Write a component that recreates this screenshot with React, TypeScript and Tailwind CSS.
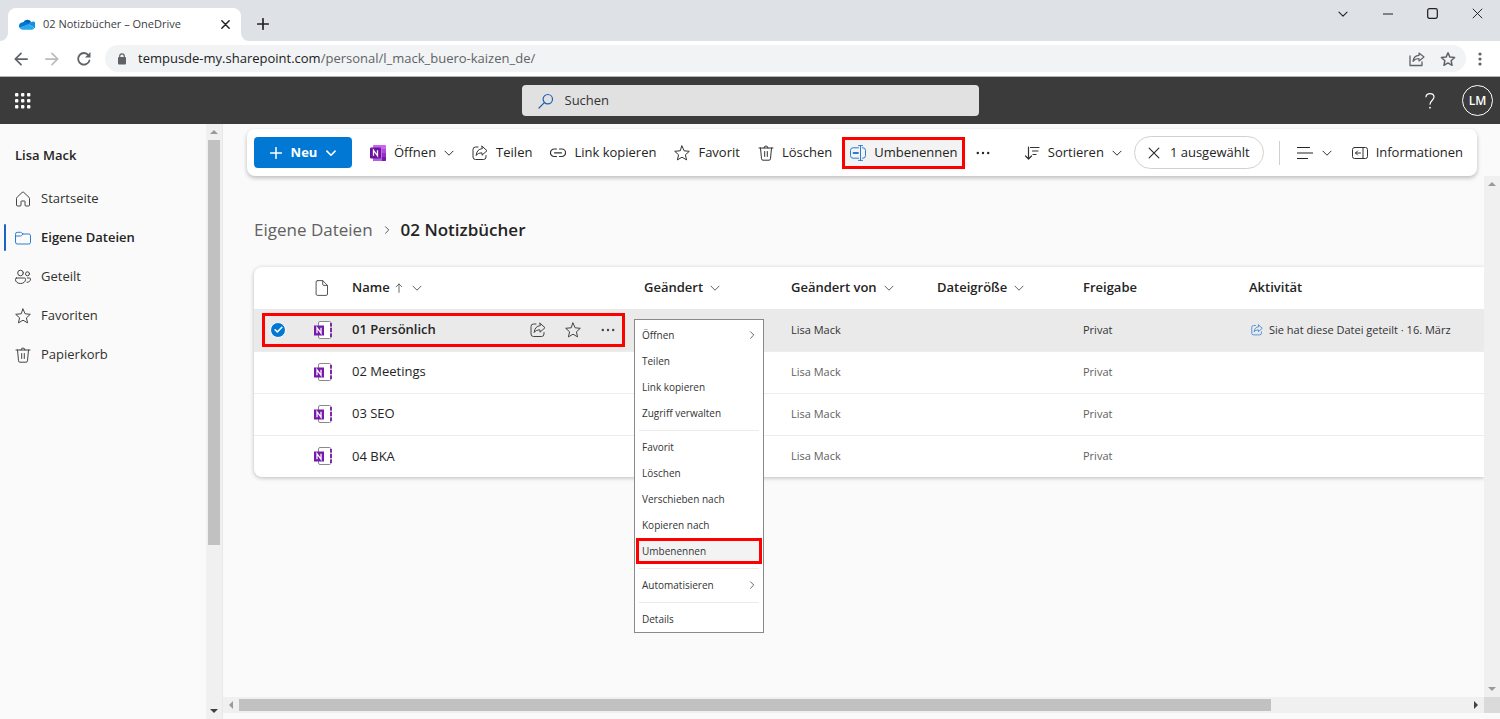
import type { ReactNode } from "react";
import clsx from "clsx";

// ---------------------------------------------------------------------------
// Data
// ---------------------------------------------------------------------------

const NAV_ITEMS = [
  { label: "Startseite", icon: <HomeIcon /> },
  { label: "Eigene Dateien", icon: <FolderIcon />, active: true },
  { label: "Geteilt", icon: <PeopleIcon /> },
  { label: "Favoriten", icon: <StarIcon /> },
  { label: "Papierkorb", icon: <TrashIcon /> },
];

const FILES = [
  { name: "01 Persönlich", owner: "Lisa Mack", sharing: "Privat", selected: true, activity: "Sie hat diese Datei geteilt · 16. März" },
  { name: "02 Meetings", owner: "Lisa Mack", sharing: "Privat" },
  { name: "03 SEO", owner: "Lisa Mack", sharing: "Privat" },
  { name: "04 BKA", owner: "Lisa Mack", sharing: "Privat" },
];

const MENU_GROUPS = [
  [{ label: "Öffnen", submenu: true }, { label: "Teilen" }, { label: "Link kopieren" }, { label: "Zugriff verwalten" }],
  [
    { label: "Favorit" },
    { label: "Löschen" },
    { label: "Verschieben nach" },
    { label: "Kopieren nach" },
    { label: "Umbenennen", marked: true },
  ],
  [{ label: "Automatisieren", submenu: true }],
  [{ label: "Details" }],
];

// ---------------------------------------------------------------------------
// Icons
// ---------------------------------------------------------------------------

function Icon({ children, className = "size-4" }: { children: ReactNode; className?: string }) {
  return (
    <svg
      viewBox="0 0 16 16"
      fill="none"
      stroke="currentColor"
      strokeWidth="1"
      strokeLinecap="round"
      strokeLinejoin="round"
      className={clsx("shrink-0", className)}
      aria-hidden="true"
    >
      {children}
    </svg>
  );
}

function HomeIcon() {
  return (
    <Icon>
      <path d="M7.3 1.3a1 1 0 0 1 1.4 0l5.3 5c.3.3.5.7.5 1.1V14a1 1 0 0 1-1 1H11a1 1 0 0 1-1-1v-3.5a.5.5 0 0 0-.5-.5h-3a.5.5 0 0 0-.5.5V14a1 1 0 0 1-1 1H2.500a1 1 0 0 1-1-1V7.4c0-.4.2-.8.5-1.1z" />
    </Icon>
  );
}

function FolderIcon() {
  return (
    <Icon>
      <path d="M.5 4a1.700 1.700 0 0 1 1.700-1.700h3.400c.4 0 .8.2 1.100.5L8 4h5.800a1.700 1.700 0 0 1 1.700 1.700v6.600a1.700 1.700 0 0 1-1.700 1.700H2.200A1.700 1.700 0 0 1 .5 12.300zM.5 6h5.100c.4 0 .8-.2 1.100-.5L8 4" />
    </Icon>
  );
}

function PeopleIcon() {
  return (
    <Icon>
      <circle cx="5.5" cy="4" r="2.8" />
      <circle cx="12.5" cy="4.8" r="2" />
      <path d="M1.500 9h8a1 1 0 0 1 1 1v.7c0 2-2 3.800-5 3.800s-5-1.800-5-3.800V10a1 1 0 0 1 1-1zM12.300 9h2.200a1 1 0 0 1 1 1c0 2-1.300 3.300-3.500 3.300" />
    </Icon>
  );
}

function StarIcon({ className }: { className?: string }) {
  return (
    <Icon className={className}>
      <path d="M8 1l2.100 4.800 5.200.5-3.900 3.500 1.200 5.100L8 12.200l-4.600 2.700 1.200-5.100L.7 6.300l5.200-.5z" />
    </Icon>
  );
}

function TrashIcon() {
  return (
    <Icon>
      <path d="M1 3h14M6 3a2 2 0 0 1 4 0M2.500 3l1 10.800A1.500 1.500 0 0 0 5 15.200h6a1.500 1.500 0 0 0 1.500-1.400L13.500 3M6.700 6.500v5M9.300 6.500v5" />
    </Icon>
  );
}

function ShareIcon({ className }: { className?: string }) {
  return (
    <Icon className={className}>
      <path d="M6 2H3.500A2.500 2.500 0 0 0 1 4.500V12a2.500 2.500 0 0 0 2.500 2.500h8A2.500 2.500 0 0 0 14 12v-1.500" />
      <path d="M10 1.200l5 4.500-5 4.500V7.900c-2.800 0-4.600.7-5.800 2.600C4.400 6.600 6.500 4 10 3.600z" />
    </Icon>
  );
}

function LinkIcon() {
  return (
    <Icon>
      <path d="M6.500 4H4.200a3.700 3.700 0 0 0 0 7.500h2.300M9.500 4h2.300a3.700 3.700 0 0 1 0 7.500H9.500M4.500 7.800h7" strokeWidth="1.2" />
    </Icon>
  );
}

function RenameIcon() {
  return (
    <Icon>
      <path d="M8.500 2.800H3A2.500 2.500 0 0 0 .5 5.300v5.400A2.500 2.500 0 0 0 3 13.200h5.500M12.500 2.800h.5a2.500 2.500 0 0 1 2.500 2.500v5.400a2.500 2.500 0 0 1-2.500 2.500h-.5M8.500.6h4M8.500 15.400h4M10.500.6v14.800" />
      <path d="M3.500 8H8" strokeWidth="1.8" />
    </Icon>
  );
}

function SortIcon() {
  return (
    <Icon>
      <path d="M4.500 2v12M1.500 11l3 3 3-3M6.500 2.500h8.500M8.500 6H14M9 9.500h3" strokeWidth="1.2" />
    </Icon>
  );
}

function MoreIcon() {
  return (
    <Icon>
      <g fill="currentColor" stroke="none">
        <circle cx="2.8" cy="8" r="1.2" />
        <circle cx="8" cy="8" r="1.2" />
        <circle cx="13.2" cy="8" r="1.2" />
      </g>
    </Icon>
  );
}

function CloseIcon({ className = "size-3", width = "1.4" }: { className?: string; width?: string }) {
  return (
    <Icon className={className}>
      <path d="M1.500 1.500l13 13M14.500 1.500l-13 13" strokeWidth={width} />
    </Icon>
  );
}

function ListIcon() {
  return (
    <Icon>
      <path d="M.5 2.500h12M.5 8h15M.5 13.500h10" strokeWidth="1.2" />
    </Icon>
  );
}

function InfoPaneIcon() {
  return (
    <Icon>
      <rect x=".5" y="2.500" width="15" height="11" rx="2" />
      <path d="M11 2.500v11M8.500 8h-5M5.500 6l-2 2 2 2" />
    </Icon>
  );
}

function ChevronDown({ className = "size-[10px]", width = "1.5" }: { className?: string; width?: string }) {
  return (
    <Icon className={className}>
      <path d="M1.500 5L8 11.500 14.500 5" strokeWidth={width} />
    </Icon>
  );
}

function ChevronRight({ className = "size-2" }: { className?: string }) {
  return (
    <Icon className={className}>
      <path d="M5 1.500L11.500 8 5 14.500" strokeWidth="1.5" />
    </Icon>
  );
}

function DocumentIcon() {
  return (
    <Icon>
      <path d="M3.500.6h5.200l4.800 4.800V14a1.400 1.400 0 0 1-1.400 1.400H3.500A1.400 1.400 0 0 1 2.100 14V2A1.400 1.400 0 0 1 3.500.6zM8.700.6v3.600a1.200 1.200 0 0 0 1.200 1.200h3.600" />
    </Icon>
  );
}

function OneNoteAppIcon() {
  return (
    <svg viewBox="0 0 16 16" className="size-4 shrink-0" aria-hidden="true">
      <rect x="3" y="0" width="13" height="16" rx="1" fill="#ca64ea" />
      <path d="M12 4h4v4h-4z" fill="#ae4bd5" />
      <path d="M12 8h4v4h-4z" fill="#9332bf" />
      <path d="M3 12h13v3a1 1 0 0 1-1 1H4a1 1 0 0 1-1-1z" fill="#7719aa" />
      <path d="M3 12h9v4H4a1 1 0 0 1-1-1z" fill="#b55fe0" />
      <rect x="0" y="2.500" width="11" height="11" rx="1" fill="#6b14a0" />
      <path d="M3.500 10.800V5.200l4 5.600V5.200" fill="none" stroke="#fff" strokeWidth="1.3" />
    </svg>
  );
}

function OneNoteFileIcon() {
  return (
    <svg viewBox="0 0 18 18" className="size-[18px] shrink-0" aria-hidden="true">
      <rect x="4.500" y=".5" width="12.500" height="17" rx="1.500" fill="#fff" stroke="#8a8a8a" />
      <path d="M17 2v3.500M17 7v4M17 12.500V16" stroke="#7719aa" strokeWidth="1.8" />
      <path d="M0 4.500h10v10H0z" fill="#7719aa" />
      <path d="M3 12.300V6.700l4 5.600V6.700" fill="none" stroke="#fff" strokeWidth="1.3" />
    </svg>
  );
}

function OneDriveIcon() {
  return (
    <svg viewBox="0 0 16 11" className="h-[11px] w-4 shrink-0" aria-hidden="true">
      <path d="M4.200 3.500A4.600 4.600 0 0 1 12.300 3L9 6 4 5z" fill="#0364b8" />
      <path d="M4.200 3.200A3.800 3.800 0 0 0 .7 9.100L6.800 6.500 9.200 5A4 4 0 0 0 4.200 3.200z" fill="#0078d4" />
      <path d="M12.300 3.200A4 4 0 0 0 9 4.900l3.600 2 3 2.100a3.300 3.300 0 0 0-3.300-5.800z" fill="#1490df" />
      <path d="M.6 9A3.800 3.800 0 0 0 3.800 10.700h8.700A3.300 3.300 0 0 0 15.500 9L9.300 5.100z" fill="#28a8ea" />
    </svg>
  );
}

// ---------------------------------------------------------------------------
// Browser chrome
// ---------------------------------------------------------------------------

function TabStrip() {
  return (
    <div className="flex h-[41px] items-end bg-[#dee1e6] text-[#202124]">
      <svg viewBox="0 0 8 8" className="size-2 shrink-0" aria-hidden="true">
        <path d="M8 0a8 8 0 0 1-8 8h8z" fill="#fff" />
      </svg>
      <div className="flex h-[33px] w-[233px] items-center gap-2 rounded-t-lg bg-white px-[11px]">
        <OneDriveIcon />
        <span className="flex-1 truncate text-[11px] text-[#3c4043]">02 Notizbücher – OneDrive</span>
        <button type="button" aria-label="Tab schließen">
          <CloseIcon className="size-[9px]" width="2.6" />
        </button>
      </div>
      <svg viewBox="0 0 8 8" className="size-2 shrink-0" aria-hidden="true">
        <path d="M0 0a8 8 0 0 0 8 8H0z" fill="#fff" />
      </svg>
      <button type="button" aria-label="Neuer Tab" className="ml-2 flex h-[34px] items-center">
        <Icon className="size-3">
          <path d="M8 1v14M1 8h14" strokeWidth="2.2" />
        </Icon>
      </button>
      <div className="ml-auto flex self-start">
        <button type="button" aria-label="Tabs durchsuchen" className="flex h-[27px] w-[45px] items-center justify-center">
          <ChevronDown width="1.7" />
        </button>
        <button type="button" aria-label="Minimieren" className="flex h-[27px] w-[45px] items-center justify-center">
          <Icon className="size-[10px]">
            <path d="M0 8h16" strokeWidth="1.6" />
          </Icon>
        </button>
        <button type="button" aria-label="Maximieren" className="flex h-[27px] w-[45px] items-center justify-center">
          <Icon className="size-[11px]">
            <rect x="1" y="1" width="14" height="14" rx="2.5" strokeWidth="1.8" />
          </Icon>
        </button>
        <button type="button" aria-label="Schließen" className="flex h-[27px] w-[45px] items-center justify-center">
          <CloseIcon className="size-[11px]" />
        </button>
      </div>
    </div>
  );
}

function AddressBar() {
  return (
    <div className="flex h-9 items-center border-b border-[#b5b5b5] bg-white pr-[18px] pl-3.5 text-[#5f6368]">
      <button type="button" aria-label="Zurück">
        <Icon className="size-3.5">
          <path d="M15 8H1.500M8 1.500L1.500 8 8 14.500" strokeWidth="2" />
        </Icon>
      </button>
      <button type="button" aria-label="Vorwärts" className="ml-[17px] text-[#b9bbbe]">
        <Icon className="size-3.5">
          <path d="M1 8h13.500M8 1.500L14.500 8 8 14.500" strokeWidth="2" />
        </Icon>
      </button>
      <button type="button" aria-label="Neu laden" className="ml-[17px]">
        <Icon className="size-4">
          <path d="M13.500 9.500A5.800 5.800 0 1 1 12.500 4.200" strokeWidth="1.8" />
          <path d="M14.500 1v5.500H9z" fill="currentColor" stroke="none" />
        </Icon>
      </button>
      <div className="ml-[13px] flex h-[27px] flex-1 items-center rounded-full bg-[#f1f3f4] pr-2.5 pl-3 text-[13px]">
        <svg viewBox="0 0 10 12" className="h-3 w-2.5 shrink-0" aria-hidden="true">
          <rect x="1" y="4" width="8" height="7.500" rx="1" fill="#5f6368" />
          <path d="M2.700 4.500V3.200a2.300 2.300 0 0 1 4.600 0v1.300" fill="none" stroke="#5f6368" strokeWidth="1.2" />
        </svg>
        <label htmlFor="address" className="ml-[11px] text-[#202124]">
          tempusde-my.sharepoint.com
        </label>
        <input
          id="address"
          defaultValue="/personal/l_mack_buero-kaizen_de/"
          className="min-w-0 flex-1 bg-transparent text-[#5f6368] outline-none"
        />
        <button type="button" aria-label="Seite teilen" className="mr-[15px]">
          <Icon className="size-4">
            <path d="M1 5v9.500h12V11" strokeWidth="1.3" />
            <path d="M10 2l5 4-5 4V7.500c-3 0-4.500.8-6 2.800.4-3.500 2.500-5.600 6-5.900z" strokeWidth="1.2" />
          </Icon>
        </button>
        <button type="button" aria-label="Lesezeichen">
          <Icon className="size-4">
            <path d="M8 1.800l1.900 4.300 4.700.4-3.500 3.200 1 4.600L8 11.900l-4.100 2.400 1-4.600L1.400 6.500l4.700-.4z" strokeWidth="1.5" />
          </Icon>
        </button>
      </div>
      <button type="button" aria-label="Menü" className="ml-3">
        <svg viewBox="0 0 4 14" className="h-3.5 w-1" fill="currentColor" aria-hidden="true">
          <circle cx="2" cy="2" r="1.6" />
          <circle cx="2" cy="7" r="1.6" />
          <circle cx="2" cy="12" r="1.6" />
        </svg>
      </button>
    </div>
  );
}

function SuiteHeader() {
  return (
    <header className="grid h-[47px] grid-cols-[1fr_457px_1fr] items-center bg-[#3b3b3b] text-white">
      <button type="button" aria-label="App-Startfeld" className="ml-[15px] justify-self-start">
        <svg viewBox="0 0 16 16" className="size-4" fill="currentColor" aria-hidden="true">
          {[0, 6, 12].map((y) =>
            [0, 6, 12].map((x) => <rect key={`${x}-${y}`} x={x} y={y} width="3.400" height="3.400" rx="1" />),
          )}
        </svg>
      </button>
      <label className="flex h-[31px] items-center gap-[11px] rounded-sm bg-[#e1e1e1] px-4 text-[#333]">
        <Icon className="size-4 text-[#1f5fb0]">
          <circle cx="9.8" cy="6.2" r="4.7" strokeWidth="1.2" />
          <path d="M6.400 9.600L1 15" strokeWidth="1.2" />
        </Icon>
        <input
          type="search"
          aria-label="Suchen"
          placeholder="Suchen"
          className="min-w-0 flex-1 bg-transparent text-[13px] outline-none placeholder:text-[#333]"
        />
      </label>
      <div className="flex items-center justify-end gap-6 pr-[7px]">
        <button type="button" aria-label="Hilfe">
          <Icon className="size-4">
            <path d="M4 3.800C4.200 1.800 5.700.6 8 .6s4 1.300 4 3.500c0 3.100-4 3.700-4 7.100" strokeWidth="1.2" />
            <circle cx="8" cy="14.7" r=".9" fill="currentColor" stroke="none" />
          </Icon>
        </button>
        <button type="button" className="flex size-[31px] items-center justify-center rounded-full border border-white text-[12px] font-semibold">
          LM
        </button>
      </div>
    </header>
  );
}

// ---------------------------------------------------------------------------
// Scrollbars
// ---------------------------------------------------------------------------

function ScrollArrow({ direction, dark }: { direction: "up" | "down" | "left" | "right"; dark?: boolean }) {
  return (
    <span className="flex size-4 shrink-0 items-center justify-center">
      <svg
        viewBox="0 0 8 8"
        className={clsx(
          "size-2",
          dark ? "text-[#404040]" : "text-[#9a9a9a]",
          direction === "down" && "rotate-180",
          direction === "left" && "-rotate-90",
          direction === "right" && "rotate-90",
        )}
        fill="currentColor"
        aria-hidden="true"
      >
        <path d="M4 2l4 4H0z" />
      </svg>
    </span>
  );
}

// ---------------------------------------------------------------------------
// Sidebar
// ---------------------------------------------------------------------------

function Sidebar() {
  return (
    <aside className="flex w-[223px] shrink-0 border-r border-[#e8e8e8]">
      <nav className="flex-1">
        <h2 className="flex h-[55px] items-center pt-2 pl-[15px] text-[13px] font-semibold">Lisa Mack</h2>
        {NAV_ITEMS.map((item) => (
          <a
            key={item.label}
            href="#"
            className={clsx("flex h-[39px] items-center pl-1 text-[13px]", item.active ? "font-semibold" : "text-[#323130]")}
          >
            <span className={clsx("mr-[9px] h-[27px] w-0.5 rounded-full", item.active && "bg-[#1a66c2]")} />
            <span className={item.active ? "text-[#2b7cd3]" : "text-[#444]"}>{item.icon}</span>
            <span className="ml-[10px]">{item.label}</span>
          </a>
        ))}
      </nav>
      <div className="flex w-4 flex-col bg-[#f0f0f0]">
        <ScrollArrow direction="up" />
        <div className="flex-1 px-0.5">
          <div className="h-[72%] bg-[#c1c1c1]" />
        </div>
        <ScrollArrow direction="down" dark />
      </div>
    </aside>
  );
}

// ---------------------------------------------------------------------------
// Command bar
// ---------------------------------------------------------------------------

function Command({ icon, label, menu, marked }: { icon: ReactNode; label: string; menu?: boolean; marked?: boolean }) {
  return (
    <button
      type="button"
      className={clsx(
        "flex h-8 items-center gap-2 text-[13px] whitespace-nowrap",
        marked ? "border-3 border-[#f00] bg-[#f3f3f3] px-[5px]" : "px-2",
      )}
    >
      <span className={marked ? "text-[#2b7cd3]" : "text-[#333]"}>{icon}</span>
      {label}
      {menu && <ChevronDown />}
    </button>
  );
}

function CommandBar() {
  return (
    <div className="z-10 mt-[5px] mr-[23px] ml-6 flex h-[47px] shrink-0 items-center rounded-lg bg-white pr-1.5 pl-[7px] shadow-[0_2px_4px_rgba(0,0,0,0.25)]">
      <button
        type="button"
        className="mr-[10px] flex h-[31px] w-[98px] items-center justify-center gap-[9px] rounded bg-[#0078d4] text-[13px] font-bold text-white"
      >
        <Icon className="size-3">
          <path d="M8 .8v14.400M.8 8h14.400" strokeWidth="2" />
        </Icon>
        Neu
        <ChevronDown width="2.5" />
      </button>
      <div className="flex items-center gap-0.5">
        <Command icon={<OneNoteAppIcon />} label="Öffnen" menu />
        <Command icon={<ShareIcon />} label="Teilen" />
        <Command icon={<LinkIcon />} label="Link kopieren" />
        <Command icon={<StarIcon />} label="Favorit" />
        <Command icon={<TrashIcon />} label="Löschen" />
        <Command icon={<RenameIcon />} label="Umbenennen" marked />
        <button type="button" aria-label="Weitere Befehle" className="flex h-8 items-center px-2">
          <MoreIcon />
        </button>
      </div>
      <div className="ml-auto flex items-center">
        <Command icon={<SortIcon />} label="Sortieren" menu />
        <button
          type="button"
          className="ml-1 flex h-[33px] items-center gap-[10px] rounded-full border border-[#d1d1d1] px-[13px] text-[13px] whitespace-nowrap"
        >
          <CloseIcon />1 ausgewählt
        </button>
        <span className="mx-[15px] h-6 w-px bg-[#d1d1d1]" />
        <button type="button" aria-label="Ansicht" className="mr-3 flex h-8 items-center gap-[9px] pl-0.5">
          <ListIcon />
          <ChevronDown />
        </button>
        <Command icon={<InfoPaneIcon />} label="Informationen" />
      </div>
    </div>
  );
}

// ---------------------------------------------------------------------------
// File list
// ---------------------------------------------------------------------------

function FileTable() {
  return (
    <div className="mt-[25px] overflow-hidden rounded-l-lg bg-white shadow-[0_1px_4px_rgba(0,0,0,0.25)]">
      <table className="w-full table-fixed text-left">
        <colgroup>
          <col className="w-11" />
          <col className="w-12" />
          <col className="w-[292px]" />
          <col className="w-[147px]" />
          <col className="w-[146px]" />
          <col className="w-[146px]" />
          <col className="w-[166px]" />
          <col />
        </colgroup>
        <thead>
          <tr className="h-[42px] text-[13px] [&_svg]:text-[#555] [&_th]:px-1.5 [&_th]:font-semibold">
            <th aria-label="Auswahl" />
            <th aria-label="Dateityp">
              <span className="flex pl-2.5">
                <DocumentIcon />
              </span>
            </th>
            <th>
              <span className="flex items-center">
                Name
                <Icon className="ml-1 size-[10px]">
                  <path d="M8 15V1.500M3.500 6L8 1.500 12.500 6" strokeWidth="1.4" />
                </Icon>
                <ChevronDown className="ml-2 size-[10px]" />
              </span>
            </th>
            <th>
              <span className="flex items-center gap-[7px]">
                Geändert <ChevronDown />
              </span>
            </th>
            <th>
              <span className="flex items-center gap-[7px] whitespace-nowrap">
                Geändert von <ChevronDown />
              </span>
            </th>
            <th>
              <span className="flex items-center gap-[7px]">
                Dateigröße <ChevronDown />
              </span>
            </th>
            <th>Freigabe</th>
            <th>Aktivität</th>
          </tr>
        </thead>
        <tbody>
          {FILES.map((file) => (
            <tr
              key={file.name}
              className={clsx("h-[42px] border-b border-[#ededed] last:border-b-0 [&_td]:px-1.5", file.selected && "bg-[#eaeaea]")}
            >
              <td className="relative">
                {file.selected && (
                  <>
                    <label className="ml-[10px] grid size-4 place-items-center">
                      <input
                        type="checkbox"
                        aria-label={file.name}
                        defaultChecked
                        className="size-4 appearance-none rounded-full border border-white bg-[#0078d4] [grid-area:1/1]"
                      />
                      <Icon className="size-[9px] text-white [grid-area:1/1]">
                        <path d="M2 8.500l4 4 8-8.500" strokeWidth="2.8" />
                      </Icon>
                    </label>
                    <span className="pointer-events-none absolute top-1 left-2 h-[34px] w-[363px] border-3 border-[#f00]" />
                  </>
                )}
              </td>
              <td>
                <span className="flex pl-2.5">
                  <OneNoteFileIcon />
                </span>
              </td>
              <td>
                <div className="flex items-center text-[#444]">
                  <a href="#" className={clsx("flex-1 text-[13px] text-[#242424]", file.selected && "font-semibold")}>
                    {file.name}
                  </a>
                  {file.selected && (
                    <div className="flex gap-[19px] pr-4">
                      <button type="button" aria-label="Teilen">
                        <ShareIcon />
                      </button>
                      <button type="button" aria-label="Favorit">
                        <StarIcon />
                      </button>
                      <button type="button" aria-label="Weitere Aktionen">
                        <MoreIcon />
                      </button>
                    </div>
                  )}
                </div>
              </td>
              <td />
              <td className={clsx("text-[11px]", file.selected ? "text-[#333]" : "text-[#616161]")}>{file.owner}</td>
              <td />
              <td className={clsx("text-[11px]", file.selected ? "text-[#333]" : "text-[#616161]")}>{file.sharing}</td>
              <td>
                {file.activity && (
                  <span className="flex items-center gap-1.5 pl-0.5 text-[11px] whitespace-nowrap text-[#333]">
                    <ShareIcon className="size-3 text-[#2b7cd3]" />
                    {file.activity}
                  </span>
                )}
              </td>
            </tr>
          ))}
        </tbody>
      </table>
    </div>
  );
}

function ContextMenu() {
  return (
    <div
      role="menu"
      className="absolute top-[143px] left-[411px] w-[130px] border border-[#8a8a8a] bg-white pt-0.5 text-[10px] text-[#333]"
    >
      {MENU_GROUPS.map((group, index) => (
        <div key={group[0].label} role="group">
          {index > 0 && <hr className="mx-1 mt-1 mb-[3px] border-[#ebebeb]" />}
          {group.map((item) => (
            <button
              key={item.label}
              type="button"
              role="menuitem"
              className={clsx(
                "flex h-[26px] items-center justify-between",
                "marked" in item && item.marked
                  ? "mx-px w-[126px] border-3 border-[#f00] bg-[#f3f3f3] px-[3px]"
                  : "w-full px-[7px]",
              )}
            >
              {item.label}
              {"submenu" in item && item.submenu && <ChevronRight />}
            </button>
          ))}
        </div>
      ))}
    </div>
  );
}

// ---------------------------------------------------------------------------
// Page
// ---------------------------------------------------------------------------

export default function App() {
  return (
    <div className="flex h-screen flex-col bg-[#fafafa] font-['Open_Sans','Noto_Sans',sans-serif] text-[#242424]">
      <TabStrip />
      <AddressBar />
      <SuiteHeader />
      <div className="flex min-h-0 flex-1">
        <Sidebar />
        <main className="flex min-w-0 flex-1 flex-col pb-1.5">
          <CommandBar />
          <div className="flex min-h-0 flex-1">
            <div className="relative min-w-0 flex-1 overflow-hidden pt-[41px] pl-[31px]">
              <nav aria-label="Brotkrumen" className="flex h-[25px] items-center gap-2.5 text-[17px]">
                <a href="#" className="text-[#616161]">
                  Eigene Dateien
                </a>
                <ChevronRight className="size-2" />
                <span className="font-semibold">02 Notizbücher</span>
              </nav>
              <FileTable />
              <ContextMenu />
            </div>
            <div className="flex w-4 flex-col justify-between bg-[#f0f0f0]">
              <ScrollArrow direction="up" />
              <ScrollArrow direction="down" />
            </div>
          </div>
          <div className="flex h-4 shrink-0 bg-[#f0f0f0]">
            <ScrollArrow direction="left" />
            <div className="flex-1 py-0.5">
              <div className="h-full w-[84%] bg-[#c1c1c1]" />
            </div>
            <ScrollArrow direction="right" dark />
            <span className="w-4 bg-[#dadada]" />
          </div>
        </main>
      </div>
    </div>
  );
}
